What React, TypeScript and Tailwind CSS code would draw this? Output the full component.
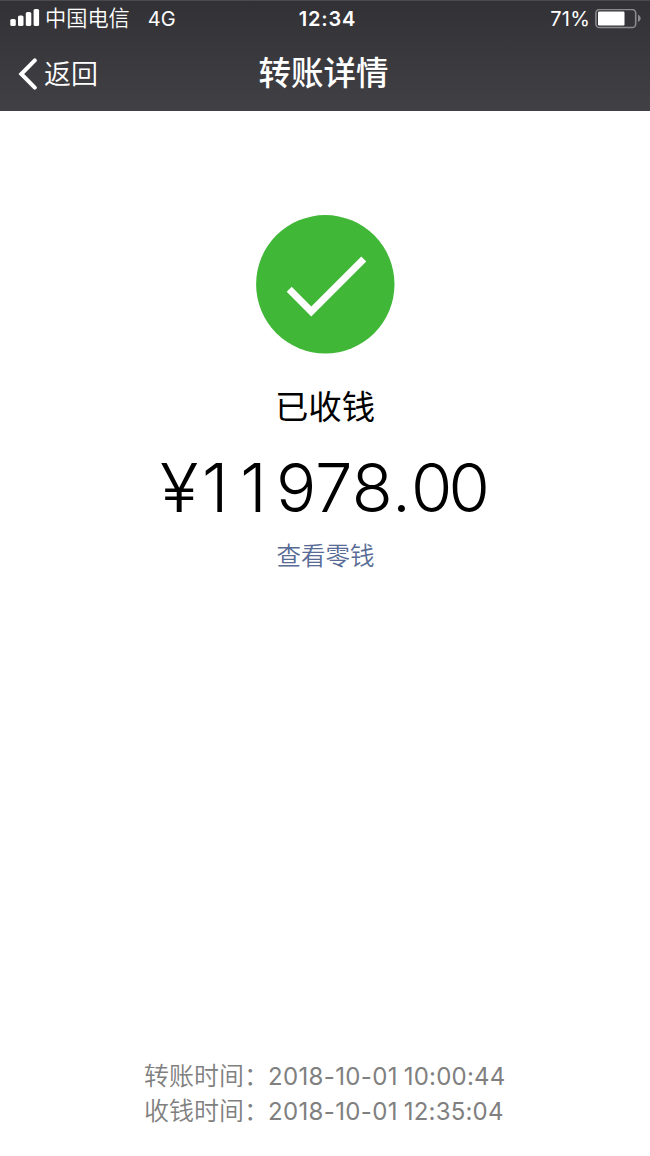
const records = [
  { label: "转账时间：", date: "2018-10-01", time: "10:00:44" },
  { label: "收钱时间：", date: "2018-10-01", time: "12:35:04" },
];

function Signal() {
  return (
    <svg width="30" height="18" viewBox="0 0 30 18" fill="#fff">
      <rect x="0.3" y="10" width="5.5" height="7" rx="1.6" />
      <rect x="8" y="6.5" width="5.5" height="10.5" rx="1.6" />
      <rect x="15.8" y="3" width="5.5" height="14" rx="1.6" />
      <rect x="23.6" y="0" width="5.5" height="17" rx="1.6" />
    </svg>
  );
}

function Battery() {
  return (
    <svg width="46" height="20" viewBox="0 0 46 20">
      <rect x="0.9" y="0.5" width="39.8" height="18" rx="3.6" fill="none" stroke="#8b8a8e" strokeWidth="1.6" />
      <rect x="3" y="2.6" width="26.5" height="13.8" rx="1.2" fill="#fff" />
      <path d="M43 5.7c1.6.6 2.6 1.9 2.6 3.6s-1 3-2.6 3.6z" fill="#8b8a8e" />
    </svg>
  );
}

export default function App() {
  return (
    <main className="flex h-[1156px] w-[650px] flex-col bg-white font-[Inter,'Noto_Sans_CJK_SC',sans-serif]">
      <header className="h-[111px] border-t border-[#4a494e] bg-linear-to-b from-[#323135] to-[#414045] text-white">
        <div className="grid h-[35px] grid-cols-3 items-center">
          <div className="flex items-center pl-[10px]">
            <Signal />
            <span className="ml-[5px] pt-px text-[21.2px] leading-none font-[350] whitespace-nowrap">中国电信</span>
            <span className="ml-[18px] pt-px text-[20px] leading-none">4G</span>
          </div>
          <span className="pl-[5px] text-center text-[20px] leading-none font-semibold tracking-[0.8px]">12:34</span>
          <div className="flex items-center justify-end pr-[9px]">
            <span className="mr-[5px] text-[20px] leading-none tracking-[0.2px]">71%</span>
            <Battery />
          </div>
        </div>
        <div className="grid h-[75px] grid-cols-3 items-center">
          <button className="flex items-center pl-[18px]">
            <svg width="20" height="32" viewBox="0 0 20 32" fill="none" stroke="#fff" strokeWidth="4">
              <path d="M16.8 2.4 3.3 16l13.5 13.6" strokeLinecap="round" />
            </svg>
            <span className="ml-[6px] pt-[2px] text-[27px] leading-none font-[350]">返回</span>
          </button>
          <h1 className="pt-[2px] pr-[3px] text-center text-[32.5px] leading-none font-medium whitespace-nowrap">转账详情</h1>
        </div>
      </header>

      <section className="flex flex-1 flex-col items-center pt-[104px]">
        <svg width="139" height="139" viewBox="0 0 139 139">
          <circle cx="69.3" cy="69.3" r="69.2" fill="#41b738" />
          <path d="M33.2 74.2 55.3 96.5 107.8 44" fill="none" stroke="#fff" strokeWidth="7" />
        </svg>
        <p className="mt-[36px] text-[33.4px] leading-[34px] text-black">已收钱</p>
        <p className="mt-[29px] flex w-[330px] font-[Inter,sans-serif] text-[67px] leading-[70px] font-light text-black">
          <span className="w-[42px] origin-left scale-x-106">¥</span>
          <span className="w-[74px] tracking-[12px]">11</span>
          <span className="w-[116px] tracking-[0.1px]">978</span>
          <span className="w-[19px] text-center">.</span>
          <span className="tracking-[-3.8px]">00</span>
        </p>
        <a className="mt-[20px] pl-px text-[24.5px] leading-[26px] font-[350] text-[#576b95]">查看零钱</a>
      </section>

      <footer className="flex flex-col pb-[27px] pl-[144px] text-[#808080]">
        {records.map((r) => (
          <div key={r.label} className="flex h-[35px] items-center leading-none whitespace-nowrap">
            <span className="w-[124px] text-[25px] font-[350]">{r.label}</span>
            <span className="text-[24px] tracking-[0.35px]">{r.date}</span>
            <span className="ml-[6px] text-[24px] tracking-[0.2px]">{r.time}</span>
          </div>
        ))}
      </footer>
    </main>
  );
}
